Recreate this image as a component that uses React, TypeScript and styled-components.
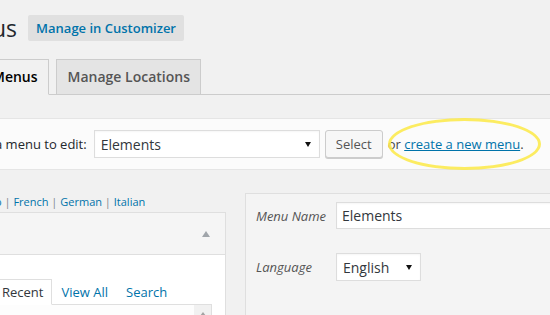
import styled, { createGlobalStyle } from "styled-components";

const languages = ["French", "German", "Italian"];
const panelTabs = ["Recent", "View All", "Search"];

const App = () => {
  return (
    <>
      <GlobalStyle />
      <Page>
        <Header>
          <Title>us</Title>
          <CustomizerButton>Manage in Customizer</CustomizerButton>
        </Header>

        <TabBar>
          <Tab $active>Menus</Tab>
          <Tab>Manage Locations</Tab>
        </TabBar>

        <ManageBar>
          <BarLabel>a menu to edit:</BarLabel>
          <SelectBox $width={226} $height={28}>
            <SelectValue>Elements</SelectValue>
            <Caret />
          </SelectBox>
          <SelectButton>Select</SelectButton>
          <Highlighted>
            or <MenuLink href="#">create a new menu</MenuLink>.
            <Ring />
          </Highlighted>
        </ManageBar>

        <Columns>
          <SideColumn>
            <LangLinks>
              <CutLetter>o</CutLetter>
              {languages.map((lang) => (
                <span key={lang}>
                  <Sep> | </Sep>
                  <LangLink>{lang}</LangLink>
                </span>
              ))}
            </LangLinks>
            <Accordion>
              <AccordionHead>
                <UpArrow />
              </AccordionHead>
              <AccordionBody>
                <PanelTabs>
                  {panelTabs.map((t, i) => (
                    <PanelTab key={t} $active={i === 0}>
                      {t}
                    </PanelTab>
                  ))}
                </PanelTabs>
                <ListBox>
                  <Scrollbar>
                    <ScrollArrow />
                  </Scrollbar>
                </ListBox>
              </AccordionBody>
            </Accordion>
          </SideColumn>

          <EditPanel>
            <FieldRow>
              <FieldLabel>Menu Name</FieldLabel>
              <TextInput>Elements</TextInput>
            </FieldRow>
            <FieldRow $spaced>
              <FieldLabel>Language</FieldLabel>
              <SelectBox $width={85} $height={28}>
                <SelectValue>English</SelectValue>
                <Caret />
              </SelectBox>
            </FieldRow>
          </EditPanel>
        </Columns>
      </Page>
    </>
  );
};

export default App;

const GlobalStyle = createGlobalStyle`
  body {
    margin: 0;
    background: #f1f1f1;
    font-family: "Open Sans", "Liberation Sans", sans-serif;
    color: #23282d;
    overflow: hidden;
  }
`;

const Page = styled.div`
  width: 550px;
  height: 315px;
  overflow: hidden;
`;

const Header = styled.div`
  display: flex;
  align-items: center;
  gap: 11px;
  padding-top: 15px;
  height: 26px;
`;

const Title = styled.h1`
  margin: -1px 0 0 -8px;
  font-size: 23px;
  font-weight: 400;
  line-height: 26px;
  color: #23282d;
`;

const CustomizerButton = styled.a`
  display: block;
  padding: 4px 8px;
  line-height: 18px;
  font-size: 13px;
  font-weight: 600;
  color: #0073aa;
  background: #e0e0e0;
  border-radius: 2px;
`;

const TabBar = styled.div`
  display: flex;
  align-items: flex-end;
  margin-top: 18px;
  border-bottom: 1px solid #ccc;
`;

const Tab = styled.div<{ $active?: boolean }>`
  padding: 5px 10px 5px 11px;
  line-height: 24px;
  font-size: 14px;
  font-weight: 600;
  border: 1px solid #ccc;
  border-bottom: none;
  margin-left: 7px;
  background: #e4e4e4;
  color: #555;

  ${(p) =>
    p.$active &&
    `
    margin-left: -8px;
    padding-left: 0;
    padding-right: 10px;
    background: #f1f1f1;
    color: #000;
    border-left: none;
    border-bottom: 1px solid #f1f1f1;
    margin-bottom: -1px;
  `}
`;

const ManageBar = styled.div`
  display: flex;
  align-items: center;
  margin-top: 23px;
  padding: 11px 0;
  background: #fbfbfb;
  border: 1px solid #e5e5e5;
  border-left: none;
  border-right: none;
  font-size: 13px;
`;

const BarLabel = styled.span`
  margin-left: -5px;
  margin-right: 7px;
  color: #23282d;
`;

const SelectBox = styled.div<{ $width: number; $height: number }>`
  box-sizing: border-box;
  display: flex;
  align-items: center;
  justify-content: space-between;
  width: ${(p) => p.$width}px;
  height: ${(p) => p.$height}px;
  padding: 0 8px 0 6px;
  background: #fff;
  border: 1px solid #ddd;
  box-shadow: inset 0 1px 2px rgba(0, 0, 0, 0.04);
`;

const SelectValue = styled.span`
  font-size: 14px;
  color: #32373c;
`;

const Caret = styled.span`
  width: 0;
  height: 0;
  border-left: 3px solid transparent;
  border-right: 3px solid transparent;
  border-top: 5px solid #111;
  margin-top: 1px;
`;

const SelectButton = styled.button`
  box-sizing: border-box;
  height: 28px;
  width: 58px;
  margin-left: 5px;
  padding: 0 10px;
  font-family: inherit;
  font-size: 13px;
  color: #555;
  background: #f7f7f7;
  border: 1px solid #ccc;
  border-radius: 3px;
  box-shadow: 0 1px 0 #ccc;
`;

const Highlighted = styled.span`
  position: relative;
  margin-left: 5px;
  color: #444;
`;

const MenuLink = styled.a`
  color: #0073aa;
  text-decoration: underline;
`;

const Ring = styled.span`
  position: absolute;
  left: 0;
  top: 50%;
  width: 153px;
  height: 52px;
  box-sizing: border-box;
  transform: translateY(-50%);
  border: 3.5px solid rgba(252, 234, 80, 0.9);
  border-radius: 50%;
  pointer-events: none;
`;

const Columns = styled.div`
  display: grid;
  grid-template-columns: 226px 1fr;
  column-gap: 19px;
  margin-top: 23px;
`;

const SideColumn = styled.div`
  display: flex;
  flex-direction: column;
`;

const LangLinks = styled.div`
  font-size: 11px;
  line-height: 18px;
  margin-bottom: 1px;
  white-space: nowrap;
`;

const CutLetter = styled.span`
  display: inline-block;
  margin-left: -5px;
  color: #0073aa;
`;

const Sep = styled.span`
  color: #82878c;
  white-space: pre;
`;

const LangLink = styled.a`
  color: #0073aa;
`;

const Accordion = styled.div`
  border: 1px solid #dfdfdf;
  border-left: none;
  background: #fff;
`;

const AccordionHead = styled.div`
  display: flex;
  align-items: center;
  justify-content: flex-end;
  height: 41px;
  padding-right: 15px;
  background: #f5f5f5;
  border-bottom: 1px solid #dfdfdf;
`;

const UpArrow = styled.span`
  width: 0;
  height: 0;
  border-left: 4px solid transparent;
  border-right: 4px solid transparent;
  border-bottom: 6px solid #a0a5aa;
  margin-top: 1px;
`;

const AccordionBody = styled.div`
  padding: 24px 13px 0 0;
`;

const PanelTabs = styled.div`
  display: flex;
  margin-left: -1px;
  border-bottom: 1px solid #dfdfdf;
`;

const PanelTab = styled.div<{ $active?: boolean }>`
  font-size: 13px;
  line-height: 24px;
  padding: 0 8px;
  border: 1px solid transparent;
  border-bottom: none;
  color: #0073aa;

  ${(p) =>
    p.$active &&
    `
    padding-left: 2px;
    color: #32373c;
    background: #fff;
    border-color: #dfdfdf;
    border-bottom: 1px solid #fff;
    margin-bottom: -1px;
  `}
`;

const ListBox = styled.div`
  display: flex;
  justify-content: flex-end;
  height: 40px;
  border: 1px solid #dfdfdf;
  border-top: none;
  border-left: none;
  background: #fdfdfd;
`;

const Scrollbar = styled.div`
  display: flex;
  justify-content: center;
  width: 17px;
  padding-top: 7px;
  background: #f1f1f1;
`;

const ScrollArrow = styled.span`
  width: 0;
  height: 0;
  border-left: 3px solid transparent;
  border-right: 3px solid transparent;
  border-bottom: 4px solid #a3a3a3;
`;

const EditPanel = styled.div`
  min-height: 140px;
  padding: 8px 0 0 10px;
  background: #f4f4f4;
  border: 1px solid #dfdfdf;
  border-right: none;
`;

const FieldRow = styled.div<{ $spaced?: boolean }>`
  display: flex;
  align-items: center;
  margin-top: ${(p) => (p.$spaced ? "24px" : "0")};
`;

const FieldLabel = styled.span`
  width: 80px;
  font-size: 13px;
  font-style: italic;
  color: #555;
`;

const TextInput = styled.div`
  box-sizing: border-box;
  width: 320px;
  height: 27px;
  padding: 0 5px;
  line-height: 25px;
  font-size: 14px;
  color: #32373c;
  background: #fff;
  border: 1px solid #ddd;
  box-shadow: inset 0 1px 2px rgba(0, 0, 0, 0.04);
`;
